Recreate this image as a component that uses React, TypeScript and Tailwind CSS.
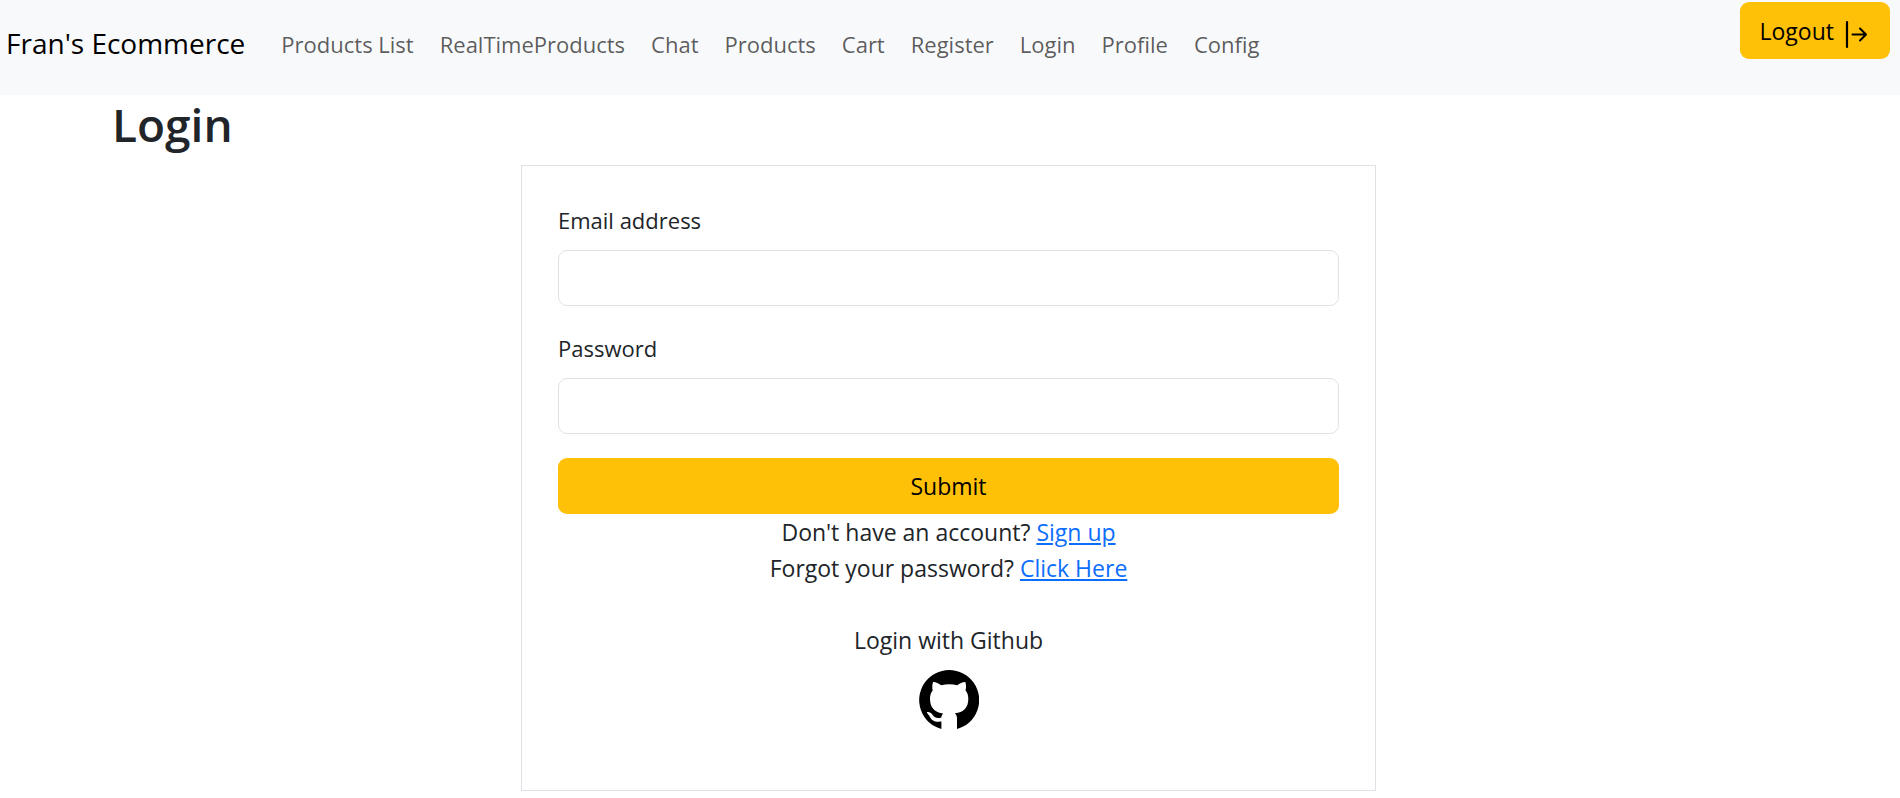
import React from "react";

const links = [
  "Products List",
  "RealTimeProducts",
  "Chat",
  "Products",
  "Cart",
  "Register",
  "Login",
  "Profile",
  "Config",
];

function LogoutIcon() {
  return (
    <svg viewBox="0 0 28 36" className="h-9 w-7" fill="none" stroke="currentColor" aria-hidden="true">
      <path d="M5 9V34" strokeWidth="2.2" strokeLinecap="round" />
      <path d="M10.5 21.5H23.5M18 15.5L24 21.5L18 27.5" strokeWidth="2" strokeLinecap="round" strokeLinejoin="round" />
    </svg>
  );
}

function GithubMark() {
  return (
    <svg viewBox="0 0 16 16" className="size-15" fill="#000" aria-hidden="true">
      <path d="M5.97 15.74A8 8 0 1 1 10.13 15.74V13C10.13 12.4 9.95 11.9 9.55 11.55C11.9 11.3 13.15 10.1 13.15 7.6C13.15 6.8 12.95 6.1 12.4 5.45C12.6 4.7 12.6 3.9 12.35 3.2C11.7 3.15 10.9 3.5 10.2 4.05C8.8 3.75 7.3 3.75 5.9 4.05C5.2 3.5 4.4 3.15 3.75 3.2C3.5 3.9 3.5 4.7 3.65 5.45C3.15 6.1 2.93 6.8 2.93 7.6C2.93 10.1 4.2 11.3 6.45 11.6C6.2 11.9 6 12.2 5.97 12.65C5 12.95 4.2 12.85 3.6 11.95C3.2 11.3 2.7 11.1 2.15 11.2C2 11.4 2.3 11.55 2.7 12.1C3.2 12.9 3.5 14 5.97 13.75Z" />
    </svg>
  );
}

function Field({ id, label, type }: { id: string; label: string; type: string }) {
  return (
    <div className="mb-6">
      <label htmlFor={id} className="mb-3 block">
        {label}
      </label>
      <input
        id={id}
        type={type}
        className="block h-14 w-full rounded-[9px] border border-[#dee2e6] bg-white px-4"
      />
    </div>
  );
}

export default function App() {
  return (
    <div className="bg-white font-['Open_Sans','Noto_Sans',sans-serif] text-[22px] leading-9 text-[#212529]">
      <nav className="flex items-start bg-[#f8f9fa] pr-[10px] pb-[29px] pl-[6px]">
        <a href="#" className="mt-[21px] mr-6 text-[28px] leading-[45px] whitespace-nowrap text-black">
          Fran's Ecommerce
        </a>
        <ul className="mt-[26px] flex grow gap-[26px] pl-3">
          {links.map((name) => (
            <li key={name}>
              <a href="#" className="whitespace-nowrap text-black/65">
                {name}
              </a>
            </li>
          ))}
        </ul>
        <button
          type="button"
          className="mt-[2px] flex h-[57px] items-center gap-2 rounded-[9px] bg-[#ffc107] px-5 text-[23px] text-black"
        >
          Logout
          <LogoutIcon />
        </button>
      </nav>

      <main className="pr-[115px] pl-[112px]">
        <h1 className="mb-3 text-[46px] leading-[58px] font-semibold">Login</h1>
        <section className="mx-auto w-full max-w-[855px] border border-[#dee2e6] px-9 pt-9 pb-[60px]">
          <form onSubmit={(e) => e.preventDefault()}>
            <Field id="email" label="Email address" type="email" />
            <Field id="password" label="Password" type="password" />
            <button type="submit" className="block h-14 w-full rounded-[9px] bg-[#ffc107] text-[23px] text-black">
              Submit
            </button>
          </form>
          <div className="text-center text-[23px]">
            <p>
              Don't have an account?{" "}
              <a href="#" className="text-[#0d6efd] underline">
                Sign up
              </a>
            </p>
            <p>
              Forgot your password?{" "}
              <a href="#" className="text-[#0d6efd] underline">
                Click Here
              </a>
            </p>
            <p className="mt-9 mb-3">Login with Github</p>
            <a href="#" aria-label="Login with Github" className="mx-auto block w-15">
              <GithubMark />
            </a>
          </div>
        </section>
      </main>
    </div>
  );
}
